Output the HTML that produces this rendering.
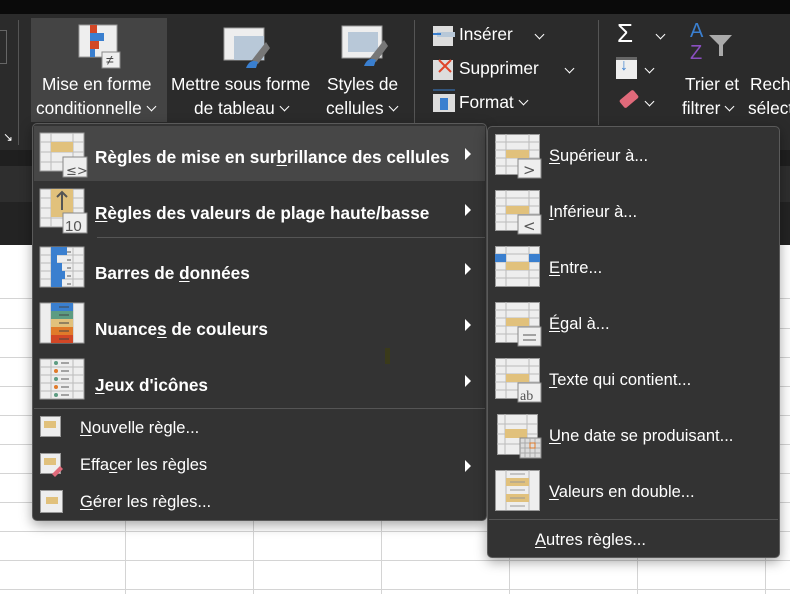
<!DOCTYPE html>
<html><head><meta charset="utf-8"><style>
*{margin:0;padding:0;box-sizing:border-box}
body{width:790px;height:594px;overflow:hidden;background:#fff;font-family:"Segoe UI","Liberation Sans",sans-serif;position:relative}
.abs{position:absolute}
.t{color:#fff;position:absolute;white-space:nowrap}
.menu{background:#333;border:1px solid #5a5a5a;border-radius:5px;box-shadow:0 4px 12px rgba(0,0,0,.35)}
.b{font-weight:bold;font-size:17.2px}
.n{font-size:16.5px}
.r{font-size:17.3px}
.arr{position:absolute;width:0;height:0;border-left:6px solid #fff;border-top:6px solid transparent;border-bottom:6px solid transparent}
.cv{display:inline-block;width:7px;height:7px;border-right:1.6px solid #fff;border-bottom:1.6px solid #fff;transform:rotate(45deg);margin-left:6px;vertical-align:4px}
.cva{position:absolute;width:7px;height:7px;border-right:1.6px solid #fff;border-bottom:1.6px solid #fff;transform:rotate(45deg)}
u{text-decoration:underline;text-underline-offset:2px}
</style></head><body>
<svg class="abs" style="left:0;top:240px" width="790" height="354">
<g stroke="#d4d4d4" stroke-width="1">
<line x1="0" y1="58.5" x2="790" y2="58.5"/><line x1="0" y1="88.5" x2="790" y2="88.5"/><line x1="0" y1="117.5" x2="790" y2="117.5"/><line x1="0" y1="146.5" x2="790" y2="146.5"/><line x1="0" y1="175.5" x2="790" y2="175.5"/><line x1="0" y1="204.5" x2="790" y2="204.5"/><line x1="0" y1="233.5" x2="790" y2="233.5"/><line x1="0" y1="262.5" x2="790" y2="262.5"/><line x1="0" y1="291.5" x2="790" y2="291.5"/><line x1="0" y1="320.5" x2="790" y2="320.5"/><line x1="0" y1="349.5" x2="790" y2="349.5"/>
<line x1="125.5" y1="0" x2="125.5" y2="354"/><line x1="253.5" y1="0" x2="253.5" y2="354"/><line x1="381.5" y1="0" x2="381.5" y2="354"/><line x1="509.5" y1="0" x2="509.5" y2="354"/><line x1="637.5" y1="0" x2="637.5" y2="354"/><line x1="765.5" y1="0" x2="765.5" y2="354"/>
</g></svg>
<div class="abs" style="left:0;top:0;width:790px;height:14px;background:#0a0a0a"></div>
<div class="abs" style="left:0;top:14px;width:790px;height:136px;background:#2b2b2b"></div>
<div class="abs" style="left:0;top:150px;width:790px;height:16px;background:#1f1f1f"></div>
<div class="abs" style="left:0;top:166px;width:790px;height:36px;background:#2e2e2e"></div>
<div class="abs" style="left:0;top:202px;width:790px;height:43px;background:#232323"></div>
<div class="abs" style="left:18px;top:20px;width:1px;height:125px;background:#555"></div>
<div class="abs" style="left:0;top:30px;width:7px;height:34px;border:1px solid #666;border-left:none"></div>
<div class="t" style="left:3px;top:130px;font-size:12px">↘</div>
<div class="abs" style="left:31px;top:18px;width:136px;height:104px;background:#444"></div>
<div class="abs" style="left:414px;top:20px;width:1px;height:105px;background:#555"></div>
<div class="abs" style="left:598px;top:20px;width:1px;height:105px;background:#555"></div>
<svg class="abs" style="left:78px;top:24px" width="46" height="46"><rect x="1" y="1" width="38" height="32" fill="#eee" stroke="#999"/><rect x="12" y="1" width="7" height="8" fill="#d24726"/><rect x="12" y="9" width="14" height="8" fill="#3a7fcf"/><rect x="12" y="17" width="9" height="8" fill="#d24726"/><rect x="12" y="25" width="5" height="8" fill="#3a7fcf"/><rect x="24" y="28" width="18" height="16" fill="#eee" stroke="#888"/><text x="28" y="41" font-size="14" fill="#444" font-family="Liberation Sans">≠</text></svg>
<svg class="abs" style="left:222px;top:26px" width="50" height="46"><rect x="2" y="2" width="40" height="32" fill="#eee" stroke="#999"/><rect x="12" y="10" width="30" height="24" fill="#b8c8d8"/><path d="M44 16 L30 34 L36 38 L48 22Z" fill="#777"/><path d="M24 42 Q28 32 36 36 L34 42Z" fill="#3a7fcf"/></svg>
<svg class="abs" style="left:340px;top:24px" width="50" height="46"><rect x="2" y="2" width="40" height="32" fill="#eee" stroke="#999"/><rect x="8" y="8" width="30" height="20" fill="#b8c8d8"/><path d="M44 16 L30 34 L36 38 L48 22Z" fill="#777"/><path d="M24 42 Q28 32 36 36 L34 42Z" fill="#3a7fcf"/></svg>
<div class="t r" style="left:42px;top:74px">Mise en forme</div>
<div class="t r" style="left:36px;top:98px">conditionnelle<span class="cv"></span></div>
<div class="t r" style="left:171px;top:74px">Mettre sous forme</div>
<div class="t r" style="left:194px;top:98px">de tableau<span class="cv"></span></div>
<div class="t r" style="left:327px;top:74px">Styles de</div>
<div class="t r" style="left:326px;top:98px">cellules<span class="cv"></span></div>
<svg class="abs" style="left:431px;top:24px" width="26" height="90"><rect x="2" y="2" width="20" height="20" fill="#ddd"/><rect x="6" y="8" width="18" height="5" fill="#b8c8d8"/><path d="M2 10h8" stroke="#3a7fcf" stroke-width="2"/><rect x="2" y="36" width="20" height="20" fill="#ddd"/><path d="M8 36l12 12M20 36L8 48" stroke="#e0452a" stroke-width="2"/><rect x="2" y="70" width="22" height="18" fill="#ddd"/><rect x="9" y="74" width="8" height="12" fill="#3a7fcf"/><path d="M2 66h22" stroke="#3a7fcf"/></svg>
<div class="t r" style="left:459px;top:24px">Insérer</div><div class="cva" style="left:536px;top:31px"></div>
<div class="t r" style="left:459px;top:58px">Supprimer</div><div class="cva" style="left:566px;top:65px"></div>
<div class="t r" style="left:459px;top:92px">Format<span class="cv"></span></div>
<div class="t" style="left:617px;top:18px;font-size:26px">Σ</div><div class="cva" style="left:657px;top:31px"></div>
<div class="abs" style="left:616px;top:57px;width:21px;height:22px;background:#eee;border-top:3px solid #666"></div><div class="t" style="left:620px;top:57px;font-size:16px;color:#3a7fcf;font-weight:bold">↓</div><div class="cva" style="left:646px;top:65px"></div>
<div class="abs" style="left:620px;top:94px;width:18px;height:10px;background:#e06a7a;transform:rotate(-40deg);border-radius:2px"></div><div class="cva" style="left:646px;top:98px"></div>
<div class="t" style="left:690px;top:20px;font-size:20px;color:#3a7fcf">A</div><div class="t" style="left:690px;top:42px;font-size:20px;color:#8a4fbf">Z</div>
<svg class="abs" style="left:708px;top:34px" width="26" height="24"><path d="M1 1h23l-9 10v11h-4V11Z" fill="#aaa"/></svg>
<div class="t r" style="left:685px;top:74px">Trier et</div>
<div class="t r" style="left:682px;top:98px">filtrer<span class="cv"></span></div>
<div class="t r" style="left:750px;top:74px">Reche</div>
<div class="t r" style="left:748px;top:98px">sélect</div>

<div class="abs menu" style="left:32px;top:123px;width:455px;height:398px"></div>
<div class="abs" style="left:34px;top:126px;width:451px;height:55px;background:#474747"></div>
<div class="abs" style="left:97px;top:237px;width:388px;height:1px;background:#555"></div>
<div class="abs" style="left:34px;top:408px;width:451px;height:1px;background:#555"></div>
<svg class="abs" style="left:39px;top:132px" width="50" height="46"><rect x="1" y="1" width="44" height="38" fill="#eee" stroke="#999"/><path d="M12 1v38M34 1v38M1 10h44M1 20h44M1 30h44" stroke="#bbb"/><rect x="12" y="10" width="22" height="10" fill="#e1c17c"/><rect x="24" y="25" width="24" height="20" fill="#eee" stroke="#888"/><text x="27" y="43" font-size="13" fill="#555" font-family="DejaVu Sans">≤&gt;</text></svg>
<svg class="abs" style="left:39px;top:188px" width="50" height="46"><rect x="1" y="1" width="44" height="38" fill="#eee" stroke="#999"/><path d="M12 1v38M34 1v38M1 10h44M1 20h44M1 30h44" stroke="#bbb"/><rect x="12" y="1" width="22" height="28" fill="#e1c17c"/><path d="M23 22V4M18 9l5-5 5 5" stroke="#555" stroke-width="2" fill="none"/><rect x="24" y="25" width="24" height="20" fill="#eee" stroke="#888"/><text x="26" y="43" font-size="15" fill="#555" font-family="Liberation Sans">10</text></svg>
<svg class="abs" style="left:39px;top:246px" width="50" height="42"><rect x="1" y="1" width="44" height="40" fill="#eee" stroke="#999"/><path d="M12 1v40M34 1v40M1 9h44M1 17h44M1 25h44M1 33h44" stroke="#bbb"/><rect x="12" y="1" width="16" height="8" fill="#3a7fcf"/><rect x="12" y="9" width="6" height="8" fill="#3a7fcf"/><rect x="12" y="17" width="11" height="8" fill="#3a7fcf"/><rect x="12" y="25" width="14" height="8" fill="#3a7fcf"/><rect x="12" y="33" width="11" height="8" fill="#3a7fcf"/><path d="M28 6h4M28 14h4M28 22h4M28 30h4M28 38h4" stroke="#555"/></svg>
<svg class="abs" style="left:39px;top:302px" width="50" height="42"><rect x="1" y="1" width="44" height="40" fill="#eee" stroke="#999"/><path d="M12 1v40M34 1v40" stroke="#bbb"/><rect x="12" y="1" width="22" height="8" fill="#3a7fcf"/><rect x="12" y="9" width="22" height="8" fill="#5d9c82"/><rect x="12" y="17" width="22" height="8" fill="#e1c17c"/><rect x="12" y="25" width="22" height="8" fill="#e07a2a"/><rect x="12" y="33" width="22" height="8" fill="#d24726"/><path d="M20 5h10M20 13h10M20 21h10M20 29h10M20 37h10" stroke="#444"/></svg>
<svg class="abs" style="left:39px;top:358px" width="50" height="42"><rect x="1" y="1" width="44" height="40" fill="#eee" stroke="#999"/><path d="M12 1v40M34 1v40M1 9h44M1 17h44M1 25h44M1 33h44" stroke="#bbb"/><g fill="#5d9c82"><circle cx="17" cy="5" r="2"/><circle cx="17" cy="21" r="2"/><circle cx="17" cy="37" r="2"/></g><g fill="#e07a2a"><circle cx="17" cy="13" r="2"/><circle cx="17" cy="29" r="2"/></g><path d="M22 5h8M22 13h8M22 21h8M22 29h8M22 37h8" stroke="#555"/></svg>
<div class="t b" style="left:95px;top:147px">Règles de mise en sur<u>b</u>rillance des cellules</div><div class="arr" style="left:465px;top:148px"></div>
<div class="t b" style="left:95px;top:203px"><u>R</u>ègles des valeurs de plage haute/basse</div><div class="arr" style="left:465px;top:204px"></div>
<div class="t b" style="left:95px;top:263px">Barres de <u>d</u>onnées</div><div class="arr" style="left:465px;top:263px"></div>
<div class="t b" style="left:95px;top:319px">Nuance<u>s</u> de couleurs</div><div class="arr" style="left:465px;top:319px"></div>
<div class="t b" style="left:95px;top:375px"><u>J</u>eux d'icônes</div><div class="arr" style="left:465px;top:375px"></div>
<div class="abs" style="left:385px;top:348px;width:5px;height:16px;background:#3a3a1a"></div>
<svg class="abs" style="left:40px;top:416px" width="24" height="24"><rect x="0.5" y="0.5" width="20" height="20" fill="#eee" stroke="#999"/><rect x="4" y="5" width="12" height="7" fill="#e1c17c"/></svg>
<svg class="abs" style="left:40px;top:453px" width="24" height="24"><rect x="0.5" y="0.5" width="20" height="20" fill="#eee" stroke="#999"/><rect x="4" y="5" width="12" height="7" fill="#e1c17c"/><path d="M12 21l8-8 3 3-8 8z" fill="#e06a7a"/></svg>
<svg class="abs" style="left:40px;top:490px" width="24" height="24"><rect x="0.5" y="0.5" width="22" height="22" fill="#eee" stroke="#999"/><rect x="6" y="7" width="12" height="7" fill="#e1c17c"/></svg>
<div class="t n" style="left:80px;top:419px"><u>N</u>ouvelle règle...</div>
<div class="t n" style="left:80px;top:456px">Effa<u>c</u>er les règles</div><div class="arr" style="left:465px;top:460px"></div>
<div class="t n" style="left:80px;top:493px"><u>G</u>érer les règles...</div>

<div class="abs menu" style="left:487px;top:126px;width:293px;height:432px"></div>
<div class="abs" style="left:489px;top:519px;width:289px;height:1px;background:#555"></div>
<svg class="abs" style="left:495px;top:134px" width="50" height="46"><rect x="0.5" y="0.5" width="44" height="40" fill="#eee" stroke="#999"/><path d="M11 0v40M34 0v40M0 8h44M0 16h44M0 24h44M0 32h44" stroke="#bbb"/><rect x="11" y="16" width="23" height="8" fill="#e1c17c"/><rect x="23" y="25" width="23" height="19" fill="#eee" stroke="#888"/><text x="28" y="41" font-size="15" fill="#555" font-family="DejaVu Sans">&gt;</text></svg>
<svg class="abs" style="left:495px;top:190px" width="50" height="46"><rect x="0.5" y="0.5" width="44" height="40" fill="#eee" stroke="#999"/><path d="M11 0v40M34 0v40M0 8h44M0 16h44M0 24h44M0 32h44" stroke="#bbb"/><rect x="11" y="16" width="23" height="8" fill="#e1c17c"/><rect x="23" y="25" width="23" height="19" fill="#eee" stroke="#888"/><text x="28" y="41" font-size="15" fill="#555" font-family="DejaVu Sans">&lt;</text></svg>
<svg class="abs" style="left:495px;top:246px" width="50" height="46"><rect x="0.5" y="0.5" width="44" height="40" fill="#eee" stroke="#999"/><path d="M11 0v40M34 0v40M0 8h44M0 16h44M0 24h44M0 32h44" stroke="#bbb"/><rect x="0" y="8" width="11" height="8" fill="#3a7fcf"/><rect x="34" y="8" width="11" height="8" fill="#3a7fcf"/><rect x="11" y="16" width="23" height="8" fill="#e1c17c"/></svg>
<svg class="abs" style="left:495px;top:302px" width="50" height="46"><rect x="0.5" y="0.5" width="44" height="40" fill="#eee" stroke="#999"/><path d="M11 0v40M34 0v40M0 8h44M0 16h44M0 24h44M0 32h44" stroke="#bbb"/><rect x="11" y="16" width="23" height="8" fill="#e1c17c"/><rect x="23" y="25" width="23" height="19" fill="#eee" stroke="#888"/><path d="M28 33h13M28 38h13" stroke="#555"/></svg>
<svg class="abs" style="left:495px;top:358px" width="50" height="46"><rect x="0.5" y="0.5" width="44" height="40" fill="#eee" stroke="#999"/><path d="M11 0v40M34 0v40M0 8h44M0 16h44M0 24h44M0 32h44" stroke="#bbb"/><rect x="11" y="16" width="23" height="8" fill="#e1c17c"/><rect x="23" y="25" width="23" height="19" fill="#eee" stroke="#888"/><text x="25" y="42" font-size="14" fill="#555" font-family="Liberation Serif">ab</text></svg>
<svg class="abs" style="left:497px;top:414px" width="50" height="46"><rect x="0.5" y="0.5" width="40" height="40" fill="#eee" stroke="#999"/><path d="M8 0v40M30 0v40M0 10h40M0 20h40M0 30h40" stroke="#bbb"/><rect x="8" y="15" width="22" height="9" fill="#e1c17c"/><rect x="23" y="24" width="21" height="20" fill="#ddd" stroke="#888"/><path d="M23 29h21M23 34h21M23 39h21M28 24v20M33 24v20M38 24v20" stroke="#aaa"/><rect x="33" y="29" width="5" height="5" fill="none" stroke="#e07a2a"/></svg>
<svg class="abs" style="left:495px;top:470px" width="50" height="46"><rect x="0.5" y="0.5" width="44" height="40" fill="#eee" stroke="#999"/><path d="M11 0v40M34 0v40" stroke="#bbb"/><rect x="11" y="8" width="23" height="8" fill="#e1c17c"/><rect x="11" y="24" width="23" height="8" fill="#e1c17c"/><path d="M15 4h15M15 12h15M15 20h15M15 28h15M15 36h15" stroke="#999"/></svg>
<div class="t n" style="left:549px;top:147px"><u>S</u>upérieur à...</div>
<div class="t n" style="left:549px;top:203px"><u>I</u>nférieur à...</div>
<div class="t n" style="left:549px;top:259px"><u>E</u>ntre...</div>
<div class="t n" style="left:549px;top:315px"><u>É</u>gal à...</div>
<div class="t n" style="left:549px;top:371px"><u>T</u>exte qui contient...</div>
<div class="t n" style="left:549px;top:427px"><u>U</u>ne date se produisant...</div>
<div class="t n" style="left:549px;top:483px"><u>V</u>aleurs en double...</div>
<div class="t n" style="left:535px;top:531px"><u>A</u>utres règles...</div>
</body></html>
